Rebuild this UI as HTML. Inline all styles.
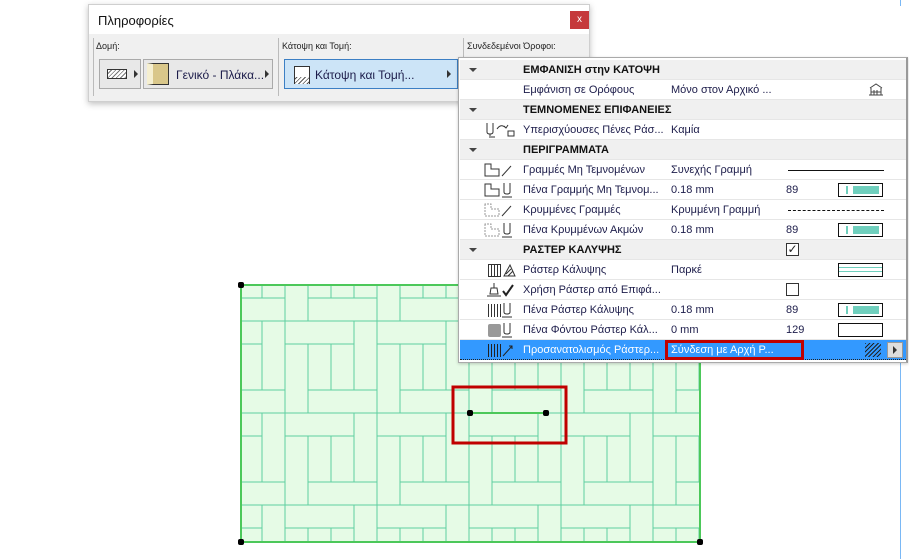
<!DOCTYPE html>
<html><head><meta charset="utf-8"><style>
*{margin:0;padding:0;box-sizing:border-box}
body{width:909px;height:559px;background:#fff;position:relative;overflow:hidden;font-family:"Liberation Sans","DejaVu Sans",sans-serif;font-size:11px;color:#1c1c4a}
.a{position:absolute}
.row{position:absolute;left:460px;width:446px;height:20px;border-bottom:1px solid #e6e6e6;background:#fff}
.hd{background:#f0f0f0;font-weight:bold;color:#111}
.row span{position:absolute;top:4px;white-space:nowrap}
.row svg{position:absolute;left:24px;top:2px}
.tri{position:absolute;left:9px;top:8px;width:0;height:0;border-left:4px solid transparent;border-right:4px solid transparent;border-top:4px solid #444}
.sw{position:absolute;left:378px;top:3px;width:45px;height:14px;border:1px solid #111;background:#fff}
.pen:before{content:"";position:absolute;left:7px;top:2px;width:2px;height:8px;background:#6fcfbd}
.pen:after{content:"";position:absolute;left:14px;top:2px;width:26px;height:8px;background:#6fcfbd}
.cb{position:absolute;left:326px;top:3px;width:13px;height:13px;border:1px solid #333;background:#fff;font-size:12px;line-height:11px;text-align:center;color:#222}
</style></head><body>

<svg class="a" style="left:0;top:0" width="909" height="559">
<defs>
<pattern id="p" x="469" y="413" width="92" height="92" patternUnits="userSpaceOnUse">
<rect width="92" height="92" fill="#e6fbe6"/>
<g fill="none" stroke="#5fcfa0" stroke-width="1">
<rect x="0" y="0" width="69" height="23"/>
<rect x="69" y="0" width="23" height="69"/>
<rect x="23" y="69" width="69" height="23"/>
<rect x="0" y="23" width="23" height="69"/>
<line x1="46" y1="23" x2="46" y2="69"/>
</g>
</pattern>
</defs>
<rect x="241" y="285" width="459" height="257" fill="url(#p)" stroke="#4cc85a" stroke-width="2"/>
<line x1="470" y1="413" x2="546" y2="413" stroke="#4cc85a" stroke-width="2"/>
<rect x="453" y="387" width="113" height="56" fill="none" stroke="#c00000" stroke-width="3"/>
<g fill="#000"><rect x="238" y="282" width="6" height="6" rx="2"/><rect x="697" y="539" width="6" height="6" rx="2"/><rect x="238" y="539" width="6" height="6" rx="2"/><rect x="467" y="410" width="6" height="6" rx="2"/><rect x="543" y="410" width="6" height="6" rx="2"/></g>
<line x1="900.5" y1="0" x2="900.5" y2="6" stroke="#7ab8f5"/>
<line x1="900.5" y1="340" x2="900.5" y2="559" stroke="#7ab8f5"/>
</svg>

<div class="a" style="left:88px;top:4px;width:502px;height:98px;background:#f0f0f0;border:1px solid #cfcfcf;box-shadow:0 2px 6px rgba(0,0,0,.25)">
 <div class="a" style="left:0;top:0;width:500px;height:29px;background:#fff"></div>
 <div class="a" style="left:9px;top:8px;font-size:13px;color:#111">Πληροφορίες</div>
 <div class="a" style="left:481px;top:6px;width:19px;height:18px;background:#c5393b;color:#fff;font-size:10px;text-align:center;line-height:17px">x</div>
 <div class="a" style="left:4px;top:33px;width:1px;height:58px;background:#bbb"></div>
 <div class="a" style="left:189px;top:33px;width:1px;height:58px;background:#bbb"></div>
 <div class="a" style="left:374px;top:33px;width:1px;height:30px;background:#bbb"></div>
 <div class="a" style="left:7px;top:36px;font-size:9px;color:#222">Δομή:</div>
 <div class="a" style="left:193px;top:36px;font-size:9px;color:#222">Κάτοψη και Τομή:</div>
 <div class="a" style="left:378px;top:36px;font-size:9px;color:#222">Συνδεδεμένοι Όροφοι:</div>
 <div class="a" style="left:10px;top:54px;width:42px;height:30px;border:1px solid #aaa;background:#e8e8e8">
  <div class="a" style="left:7px;top:9px;width:20px;height:10px;border:1px solid #333;background:repeating-linear-gradient(135deg,#fff 0 2px,#777 2px 3px)"></div>
  <div class="a" style="left:34px;top:10px;border-top:4px solid transparent;border-bottom:4px solid transparent;border-left:4px solid #333"></div></div>
 <div class="a" style="left:54px;top:54px;width:130px;height:30px;border:1px solid #aaa;background:#e8e8e8">
  <div class="a" style="left:3px;top:3px;width:22px;height:22px;border:1px solid #333;background:#d9c78a;border-left:6px solid #f5efd0"></div>
  <div class="a" style="left:32px;top:8px;font-size:12px;color:#1c1c4a">Γενικό - Πλάκα...</div>
  <div class="a" style="left:121px;top:10px;border-top:4px solid transparent;border-bottom:4px solid transparent;border-left:4px solid #333"></div></div>
 <div class="a" style="left:195px;top:54px;width:174px;height:30px;border:1px solid #3c7fc4;background:#cce4f7">
  <div class="a" style="left:9px;top:6px;width:16px;height:18px;border:1px solid #333;border-bottom:none;background:linear-gradient(#fff 60%,transparent 60%),repeating-linear-gradient(135deg,#fff 0 2px,#555 2px 3px)"></div>
  <div class="a" style="left:30px;top:8px;font-size:12px;color:#1c1c4a">Κάτοψη και Τομή...</div>
  <div class="a" style="left:162px;top:10px;border-top:4px solid transparent;border-bottom:4px solid transparent;border-left:4px solid #333"></div></div>
</div>

<div class="a" style="left:458px;top:57px;width:450px;height:306px;background:#fff;border:1px solid #aaa;border-right:2px solid #999;box-shadow:0 1px 3px rgba(0,0,0,.2)"></div>
<div class="row hd" style="top:60px"><div class="tri"></div><span style="left:63px">ΕΜΦΑΝΙΣΗ στην ΚΑΤΟΨΗ</span></div>
<div class="row" style="top:80px"><span style="left:63px">Εμφάνιση σε Ορόφους</span><span style="left:211px">Μόνο στον Αρχικό ...</span>
<svg style="left:408px;top:3px" width="16" height="14"><path d="M2 5L8 1L14 5M3 5V12M13 5V12M1 12H15M6 7V12M9 7V12M3 9H13" stroke="#444" fill="none"/></svg></div>
<div class="row hd" style="top:100px"><div class="tri"></div><span style="left:63px">ΤΕΜΝΟΜΕΝΕΣ ΕΠΙΦΑΝΕΙΕΣ</span></div>
<div class="row" style="top:120px"><svg width="36" height="16"><path d="M3 1V10Q3 12 6 12Q9 12 9 10V1M5 15H11M6 12L6 14" stroke="#333" fill="none"/><path d="M13 7Q17 1 22 6M20 4L22 6L24 3" stroke="#333" fill="none"/><rect x="24" y="9" width="6" height="5" stroke="#333" fill="none"/></svg><span style="left:63px">Υπερισχύουσες Πένες Ράσ...</span><span style="left:211px">Καμία</span></div>
<div class="row hd" style="top:140px"><div class="tri"></div><span style="left:63px">ΠΕΡΙΓΡΑΜΜΑΤΑ</span></div>
<div class="row" style="top:160px"><svg width="36" height="16"><path d="M1 2V14H15V7H7V2Z" stroke="#333" fill="none"/><path d="M18 14L27 4" stroke="#333"/></svg><span style="left:63px">Γραμμές Μη Τεμνομένων</span><span style="left:211px">Συνεχής Γραμμή</span><div class="a" style="left:328px;top:10px;width:96px;height:1px;background:#111"></div></div>
<div class="row" style="top:180px"><svg width="36" height="16"><path d="M1 2V14H15V7H7V2Z" stroke="#333" fill="none"/><path d="M20 1V10Q20 12 23 12Q26 12 26 10V1M18 15H28" stroke="#333" fill="none"/></svg><span style="left:63px">Πένα Γραμμής Μη Τεμνομ...</span><span style="left:211px">0.18 mm</span><span style="left:326px">89</span><div class="sw pen"></div></div>
<div class="row" style="top:200px"><svg width="36" height="16"><path d="M1 2V14H15V7H7V2Z" stroke="#999" stroke-dasharray="2 1" fill="none"/><path d="M18 14L27 4" stroke="#333"/></svg><span style="left:63px">Κρυμμένες Γραμμές</span><span style="left:211px">Κρυμμένη Γραμμή</span><div class="a" style="left:328px;top:10px;width:96px;height:1px;border-top:1px dashed #111"></div></div>
<div class="row" style="top:220px"><svg width="36" height="16"><path d="M1 2V14H15V7H7V2Z" stroke="#999" stroke-dasharray="2 1" fill="none"/><path d="M20 1V10Q20 12 23 12Q26 12 26 10V1M18 15H28" stroke="#333" fill="none"/></svg><span style="left:63px">Πένα Κρυμμένων Ακμών</span><span style="left:211px">0.18 mm</span><span style="left:326px">89</span><div class="sw pen"></div></div>
<div class="row hd" style="top:240px"><div class="tri"></div><span style="left:63px">ΡΑΣΤΕΡ ΚΑΛΥΨΗΣ</span><div class="cb">✓</div></div>
<div class="row" style="top:260px"><svg width="36" height="16"><rect x="4.5" y="2.5" width="12" height="12" fill="#fff" stroke="#333"/><path d="M7.5 2V14M10.5 2V14M13.5 2V14" stroke="#333"/><path d="M20 14L26 3L31 14ZM22 12L27 7M24 14L29 9" stroke="#333" fill="none"/></svg><span style="left:63px">Ράστερ Κάλυψης</span><span style="left:211px">Παρκέ</span><div class="sw" style="background:linear-gradient(#fff 3px,#6fcfbd 3px 4px,#fff 4px 7px,#6fcfbd 7px 8px,#fff 8px)"></div></div>
<div class="row" style="top:280px"><svg width="36" height="16"><path d="M10 1V6M7 6H13L14 12H6ZM3 14H17" stroke="#333" fill="none"/><path d="M19 9L22 13L29 3" stroke="#222" stroke-width="2" fill="none"/></svg><span style="left:63px">Χρήση Ράστερ από Επιφά...</span><div class="cb"></div></div>
<div class="row" style="top:300px"><svg width="36" height="16"><path d="M4.5 2V15M7.5 2V15M10.5 2V15M13.5 2V15M16.5 2V15" stroke="#333"/><path d="M20 1V10Q20 12 23 12Q26 12 26 10V1M18 15H28" stroke="#333" fill="none"/></svg><span style="left:63px">Πένα Ράστερ Κάλυψης</span><span style="left:211px">0.18 mm</span><span style="left:326px">89</span><div class="sw pen"></div></div>
<div class="row" style="top:320px"><svg width="36" height="16"><rect x="4" y="2" width="13" height="13" rx="2" fill="#999"/><path d="M20 1V10Q20 12 23 12Q26 12 26 10V1M18 15H28" stroke="#333" fill="none"/></svg><span style="left:63px">Πένα Φόντου Ράστερ Κάλ...</span><span style="left:211px">0 mm</span><span style="left:326px">129</span><div class="sw"></div></div>
<div class="row" style="top:340px;background:#3399ff;border-bottom:1px dotted #222;color:#fff"><svg width="36" height="16"><path d="M4.5 2V15M7.5 2V15M10.5 2V15M13.5 2V15M16.5 2V15" stroke="#222"/><path d="M19 14L28 4M25 4H28V7" stroke="#222" fill="none"/></svg><span style="left:63px;color:#fff">Προσανατολισμός Ράστερ...</span>
<div class="a" style="left:205px;top:0;width:139px;height:20px;border:3px solid #c00000"></div><span style="left:211px;color:#fff">Σύνδεση με Αρχή Ρ...</span>
<div class="a" style="left:405px;top:3px;width:16px;height:14px;background:repeating-linear-gradient(135deg,#222 0 1px,transparent 1px 3px)"></div>
<div class="a" style="left:427px;top:2px;width:16px;height:16px;background:#ddd;border:1px solid #999"><div class="a" style="left:5px;top:3px;border-top:4px solid transparent;border-bottom:4px solid transparent;border-left:4px solid #333"></div></div></div>
</body></html>
